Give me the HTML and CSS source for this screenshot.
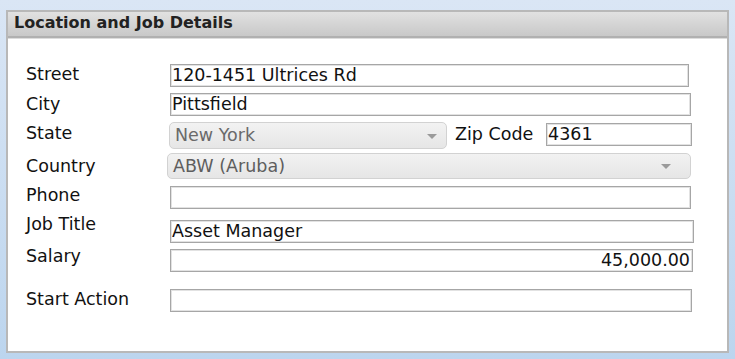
FILE: index.html
```html
<!DOCTYPE html>
<html lang="en">
<head>
  <meta charset="UTF-8" />
  <title>Location and Job Details</title>
  <link rel="stylesheet" href="styles.css">
</head>
<body>

  <div class="panel">
    <div class="panel-header">Location and Job Details</div>
    <div class="panel-body">

      <div class="row row-street">
        <label class="lbl">Street</label>
        <input class="field w-519" type="text" value="120-1451 Ultrices Rd">
      </div>

      <div class="row row-city">
        <label class="lbl">City</label>
        <input class="field w-521" type="text" value="Pittsfield">
      </div>

      <div class="row row-state">
        <label class="lbl">State</label>
        <div class="combo combo-state">New York<span class="arrow"></span></div>
        <label class="lbl-zip">Zip Code</label>
        <input class="field w-146" type="text" value="4361">
      </div>

      <div class="row row-country">
        <label class="lbl">Country</label>
        <div class="combo combo-country">ABW (Aruba)<span class="arrow"></span></div>
      </div>

      <div class="row row-phone">
        <label class="lbl">Phone</label>
        <input class="field w-521" type="text" value="">
      </div>

      <div class="row row-job">
        <label class="lbl">Job Title</label>
        <input class="field w-524" type="text" value="Asset Manager">
      </div>

      <div class="row row-salary">
        <label class="lbl">Salary</label>
        <input class="field w-523 num" type="text" value="45,000.00">
      </div>

      <div class="row row-action">
        <label class="lbl">Start Action</label>
        <input class="field w-522" type="text" value="">
      </div>

    </div>
  </div>

</body>
</html>
```

FILE: styles.css
```css
html, body {
  height: 100%;
}
body {
  margin: 0;
  padding: 10px 0 0 6px;
  box-sizing: border-box;
  font-family: "DejaVu Sans", Verdana, sans-serif;
  font-size: 17.5px;
  color: #111;
  background: linear-gradient(to bottom, #dae6f5, #bcd5ee);
}
.panel {
  width: 723px;
  height: 343px;
  box-sizing: border-box;
  border: 2px solid #b8b8b8;
  background-color: #fff;
  display: flex;
  flex-direction: column;
}
.panel-header {
  height: 24px;
  line-height: 22px;
  padding-left: 6px;
  font-size: 16px;
  font-weight: bold;
  color: #222;
  background: linear-gradient(to bottom, #e1e1e1, #c8c8c8);
  border-bottom: 2px solid #b0b0b0;
  box-shadow: 0 1px 0 #dcdcdc;
}
.panel-body {
  padding: 26px 0 0 18px;
}
.row {
  display: flex;
  align-items: flex-start;
  height: 23px;
}
.lbl {
  width: 144px;
  flex: none;
  line-height: 20px;
}
.field {
  height: 23px;
  box-sizing: border-box;
  border: 1px solid #a6a6a6;
  box-shadow: inset 0 0 0 1px #e2e2e2;
  padding: 0 2px 1px 1px;
  margin: 0;
  font-family: inherit;
  font-size: 17.5px;
  color: #111;
  background: #fff;
  outline: none;
}
.field.num {
  text-align: right;
}
.w-519 { width: 519px; }
.w-521 { width: 521px; }
.w-522 { width: 522px; }
.w-523 { width: 523px; }
.w-524 { width: 524px; }
.w-146 { width: 146px; }

.combo {
  position: relative;
  height: 27px;
  box-sizing: border-box;
  border: 1px solid #d2d2d2;
  border-radius: 5px;
  background: linear-gradient(to bottom, #f2f2f2, #e6e6e6);
  color: #6a6a6a;
  line-height: 25px;
  padding-left: 5px;
}
.combo .arrow {
  position: absolute;
  top: 11px;
  width: 0;
  height: 0;
  border-left: 5px solid transparent;
  border-right: 5px solid transparent;
  border-top: 5px solid #9a9a9a;
}
.combo-state {
  width: 278px;
  margin-left: -1px;
}
.combo-state .arrow {
  right: 9px;
}
.combo-country {
  width: 524px;
  margin-left: -3px;
  height: 26px;
  line-height: 24px;
  color: #5e5e5e;
}
.combo-country .arrow {
  right: 19px;
  top: 10px;
}
.lbl-zip {
  margin: 2px 0 0 8px;
  width: 91px;
  line-height: 20px;
}
.row-street { margin-top: 0; }
.row-city { margin-top: 6px; }
.row-city .lbl { margin-top: 1px; }
.row-state { margin-top: 6px; height: 27px; }
.row-state .lbl { margin-top: 1px; }
.row-state .field { margin-top: 1px; }
.row-country { margin-top: 4px; height: 26px; }
.row-country .lbl { margin-top: 3px; }
.row-phone { margin-top: 7px; }
.row-phone .lbl { margin-top: -1px; }
.row-job { margin-top: 11px; }
.row-job .lbl { margin-top: -6px; }
.row-salary { margin-top: 6px; }
.row-salary .lbl { margin-top: -3px; }
.row-action { margin-top: 17px; }
```
